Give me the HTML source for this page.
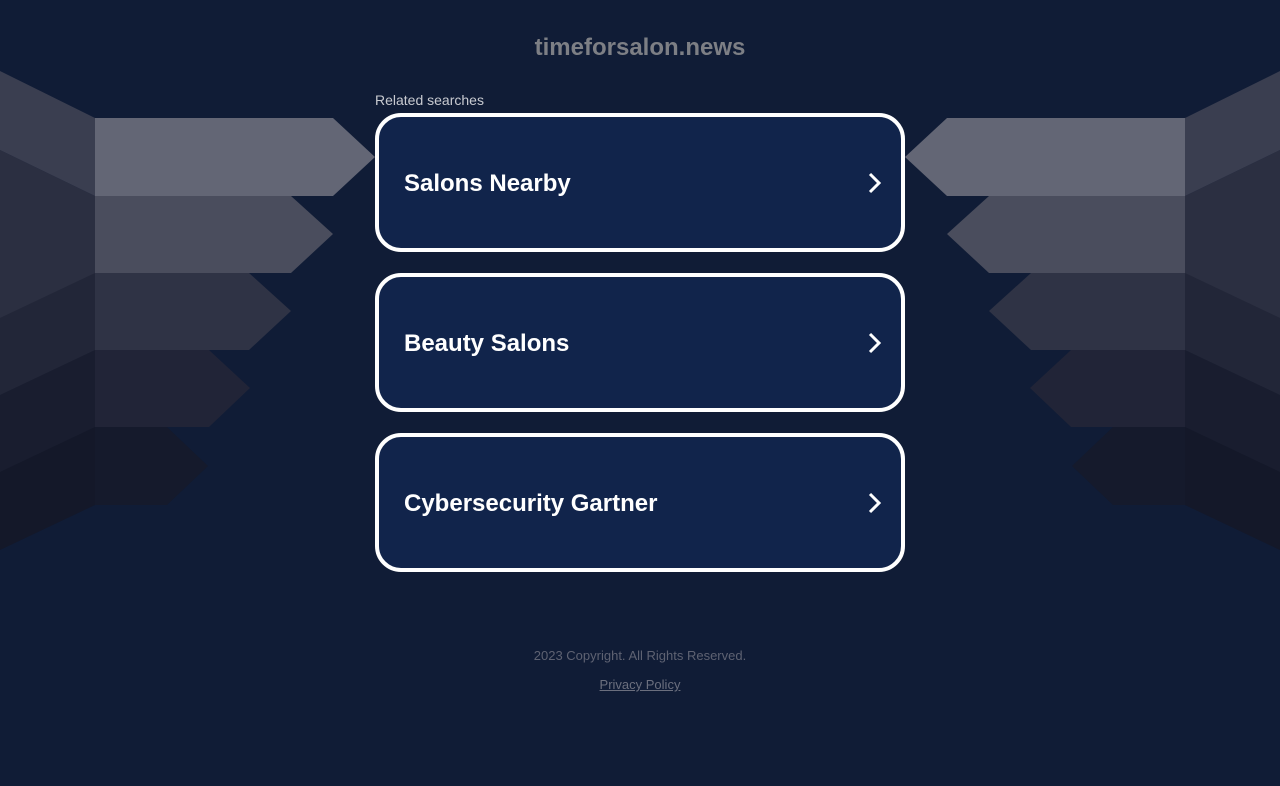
<!DOCTYPE html>
<html><head><meta charset="utf-8"><style>
html,body{margin:0;padding:0;background:#101c36;width:1280px;height:786px;overflow:hidden;font-family:"Liberation Sans",Arial,sans-serif}
svg.bg{position:absolute;left:0;top:0}
.title{position:absolute;left:0;width:1280px;top:34px;text-align:center;color:#7d7f85;font-size:24px;font-weight:bold}
.rel{position:absolute;left:375px;top:92px;color:#c8cad0;font-size:14px}
.card{position:absolute;left:375px;width:522px;height:131px;border:4px solid #fff;border-radius:26px;background:#11244b;box-sizing:content-box}
.card span{position:absolute;left:25px;top:50%;transform:translateY(-46%);color:#fff;font-size:24px;font-weight:bold}
.card svg{position:absolute;right:19px;top:55px}
.copy{position:absolute;left:0;width:1280px;top:648px;text-align:center;color:#5e6272;font-size:13px}
.pp{position:absolute;left:0;width:1280px;top:677px;text-align:center;font-size:13px}
.pp a{color:#6b6f7e;text-decoration:underline}
</style></head><body>
<svg class="bg" width="1280" height="786">
<g id="w">
<polygon points="0,380 95,427 95,505 0,550" fill="#141829"/>
<polygon points="95,427 167,427 208,466 167,505 95,505" fill="#151a2c"/>
<polygon points="0,305 95,350 95,427 0,472" fill="#191d2f"/>
<polygon points="95,350 209,350 250,388 209,427 95,427" fill="#212437"/>
<polygon points="0,228 95,273 95,350 0,395" fill="#222638"/>
<polygon points="95,273 249,273 291,311 249,350 95,350" fill="#2f3345"/>
<polygon points="0,150 95,196 95,273 0,318" fill="#2b2f41"/>
<polygon points="95,196 291,196 333,234 291,273 95,273" fill="#4a4d5d"/>
<polygon points="0,71 95,118 95,196 0,150" fill="#3a3e50"/>
<polygon points="95,118 333,118 375,157 333,196 95,196" fill="#636675"/>
</g>
<use href="#w" transform="translate(1280,0) scale(-1,1)"/>
</svg>
<div class="title">timeforsalon.news</div>
<div class="rel">Related searches</div>
<div class="card" style="top:113px"><span>Salons Nearby</span><svg width="14" height="22" viewBox="0 0 14 22"><path d="M2 2 L11 11 L2 20" fill="none" stroke="#fff" stroke-width="3"/></svg></div>
<div class="card" style="top:273px"><span>Beauty Salons</span><svg width="14" height="22" viewBox="0 0 14 22"><path d="M2 2 L11 11 L2 20" fill="none" stroke="#fff" stroke-width="3"/></svg></div>
<div class="card" style="top:433px"><span>Cybersecurity Gartner</span><svg width="14" height="22" viewBox="0 0 14 22"><path d="M2 2 L11 11 L2 20" fill="none" stroke="#fff" stroke-width="3"/></svg></div>
<div class="copy">2023 Copyright. All Rights Reserved.</div>
<div class="pp"><a>Privacy Policy</a></div>
</body></html>
